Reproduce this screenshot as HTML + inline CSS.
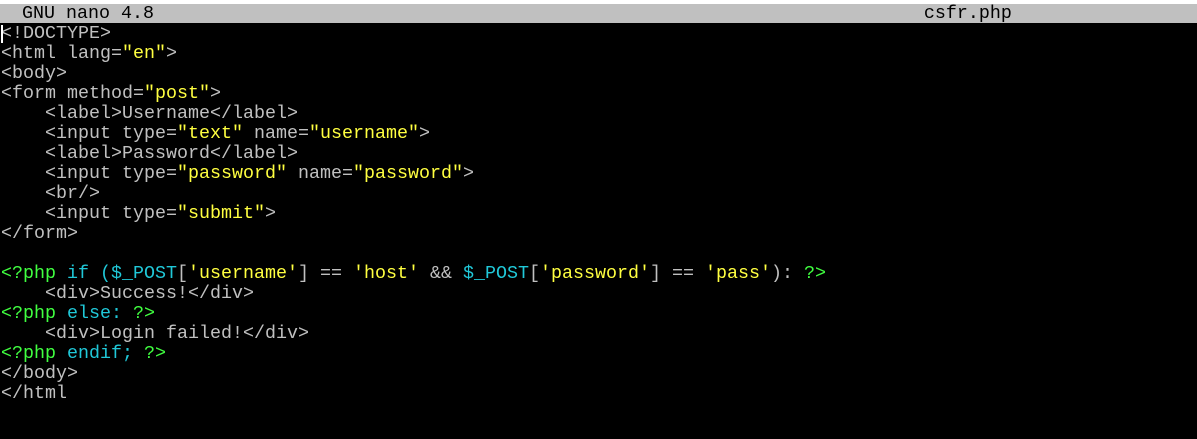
<!DOCTYPE html>
<html><head><style>
body{margin:0;width:1197px;height:439px;background:#000;overflow:hidden;font-family:"Liberation Mono",monospace;font-size:18.33px;}
.top{position:absolute;left:0;top:0;width:1197px;height:4px;background:#fff}
.bar{position:absolute;left:0;top:4px;width:1197px;height:19px;background:#c0c0c0;color:#000;line-height:19px;white-space:pre}
pre{position:absolute;left:1px;top:24px;margin:0;font:inherit;line-height:20px;color:#c0c0c0}
.y{color:#ffff40}.g{color:#40ff40}.c{color:#20c8d8}
.cur{position:absolute;left:1px;top:25px;width:2px;height:18px;background:#fff}
</style></head><body>
<div class="top"></div>
<div class="bar">  GNU nano 4.8                                                                      csfr.php</div>
<pre>&lt;!DOCTYPE&gt;
&lt;html lang=<span class="y">"en"</span>&gt;
&lt;body&gt;
&lt;form method=<span class="y">"post"</span>&gt;
    &lt;label&gt;Username&lt;/label&gt;
    &lt;input type=<span class="y">"text"</span> name=<span class="y">"username"</span>&gt;
    &lt;label&gt;Password&lt;/label&gt;
    &lt;input type=<span class="y">"password"</span> name=<span class="y">"password"</span>&gt;
    &lt;br/&gt;
    &lt;input type=<span class="y">"submit"</span>&gt;
&lt;/form&gt;

<span class="g">&lt;?php</span> <span class="c">if ($_POST</span>[<span class="y">'username'</span>] == <span class="y">'host'</span> &amp;&amp; <span class="c">$_POST</span>[<span class="y">'password'</span>] == <span class="y">'pass'</span>): <span class="g">?&gt;</span>
    &lt;div&gt;Success!&lt;/div&gt;
<span class="g">&lt;?php</span> <span class="c">else:</span> <span class="g">?&gt;</span>
    &lt;div&gt;Login failed!&lt;/div&gt;
<span class="g">&lt;?php</span> <span class="c">endif;</span> <span class="g">?&gt;</span>
&lt;/body&gt;
&lt;/html</pre>
<div class="cur"></div>
</body></html>
